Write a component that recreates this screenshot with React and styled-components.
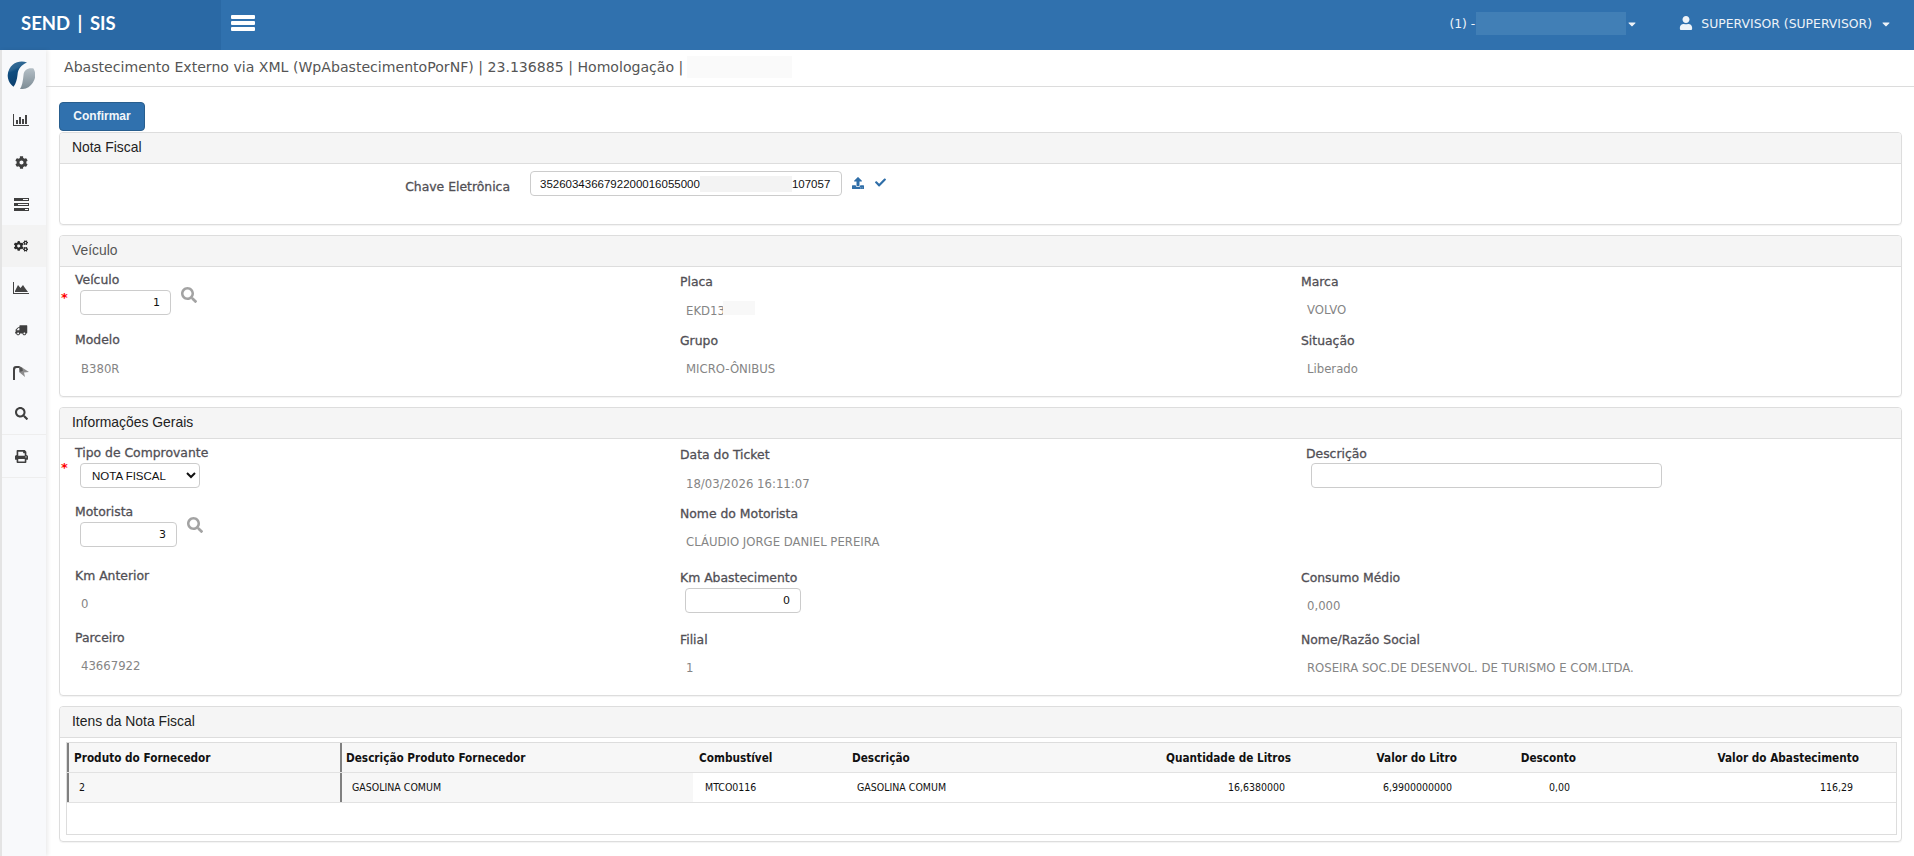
import styled, { createGlobalStyle } from "styled-components"
import { FaCog, FaCogs, FaTruck, FaSearch, FaPrint, FaUser, FaCheck, FaCaretDown, FaUpload } from "react-icons/fa"

const GlobalStyle = createGlobalStyle`
  html, body { margin: 0; padding: 0; background: #fff; }
  body { font-family: "DejaVu Sans", Verdana, sans-serif; font-size: 12px; color: #333; }
  * { box-sizing: border-box; }
`

const Page = styled.div`
  width: 1914px;
  height: 856px;
  overflow: hidden;
  display: flex;
  flex-direction: column;
`
const TopBar = styled.header`
  height: 50px;
  flex: none;
  display: flex;
  align-items: center;
  background: #3071ae;
  color: #fff;
`
const Brand = styled.div`
  width: 221px;
  height: 100%;
  display: flex;
  align-items: center;
  padding: 0 0 4px 21px;
  background: #2a69a5;
  font-family: Lato, "Open Sans", sans-serif;
  font-weight: 700;
  font-size: 18.500px;
  word-spacing: 3px;
  white-space: pre;
`
const Burger = styled.div`
  margin: 0 0 5px 10px;
  width: 24px;
  display: flex;
  flex-direction: column;
  gap: 2px;
`
const BurgerBar = styled.span`
  height: 4px;
  border-radius: 1px;
  background: #fff;
`
const TopRight = styled.div`
  margin-left: auto;
  display: flex;
  align-items: center;
  padding: 0 22px 4px 0;
  font-size: 12.4px;
  color: #eef3f8;
`
const Unit = styled.span`
  display: flex;
  align-items: center;
  margin-right: 41px;
`
const Blur = styled.span`
  display: inline-block;
  flex: none;
  width: ${(p) => p.$w}px;
  height: ${(p) => p.$h}px;
  margin-left: ${(p) => p.$ml || 0}px;
  background: ${(p) => p.$c};
`
const Caret = styled(FaCaretDown)`
  font-size: 12px;
  margin-left: ${(p) => p.$ml}px;
  margin-top: 2px;
`
const UserIcon = styled(FaUser)`
  font-size: 14px;
  margin-right: 8px;
`
const Body = styled.div`
  flex: 1;
  display: flex;
  min-height: 0;
`
const SideNav = styled.nav`
  width: 46px;
  flex: none;
  background: #f8f9fb;
  box-shadow: 2px 0 4px rgba(0, 0, 0, 0.08);
  border-left: 2px solid #e4e4e4;
  display: flex;
  flex-direction: column;
`
const LogoCell = styled.div`
  height: 49px;
  display: flex;
  align-items: center;
  justify-content: center;
  padding-right: 6px;
`
const NavItem = styled.div`
  height: ${(p) => p.$h || 42}px;
  display: flex;
  align-items: center;
  justify-content: center;
  padding-right: 6px;
  font-size: 13px;
  color: #3f3f3f;
  background: ${(p) => (p.$active ? "#f3f3f3" : "transparent")};
  border-bottom: ${(p) => (p.$line ? "1px solid #eeeeee" : "0")};
`
const TruckIcon = styled(FaTruck)`
  font-size: 12.500px;
  transform: scaleX(-1);
`
const CogsIcon = styled(FaCogs)`
  font-size: 14px;
  color: #2b2b2b;
`
const Main = styled.main`
  flex: 1;
  min-width: 0;
`
const TitleBar = styled.div`
  height: 37px;
  display: flex;
  align-items: center;
  padding: 0 0 2px 18px;
  border-bottom: 1px solid #dcdcdc;
  font-size: 14.100px;
  color: #555;
  white-space: nowrap;
`
const Content = styled.div`
  padding: 15px 12px 0 13px;
`
const ConfirmButton = styled.button`
  display: block;
  width: 86px;
  height: 29px;
  padding: 0 0 2px;
  border: 1px solid #285e8e;
  border-radius: 4px;
  background: #3071ae;
  color: #f2f6fa;
  font-family: "Liberation Sans", sans-serif;
  font-size: 12px;
  font-weight: 700;
`
const Panel = styled.section`
  margin: ${(p) => p.$mt}px 0 0;
  height: ${(p) => p.$h}px;
  border: 1px solid #dddddd;
  border-radius: 4px;
  box-shadow: 0 1px 1px rgba(0, 0, 0, 0.05);
  overflow: hidden;
`
const PanelHead = styled.div`
  height: 31px;
  display: flex;
  align-items: center;
  padding: 0 0 3px 12px;
  background: #f5f5f5;
  border-bottom: 1px solid #dddddd;
  font-family: "Liberation Sans", sans-serif;
  font-size: 13.900px;
  color: ${(p) => (p.$muted ? "#555" : "#222")};
`
const KeyRow = styled.div`
  display: flex;
  align-items: flex-start;
  padding-top: 7px;
`
const KeyLabel = styled.label`
  width: 450px;
  padding-top: 8px;
  text-align: right;
  font-weight: 500;
  font-size: 12.4px;
  color: #514f55;
  -webkit-text-stroke: 0.3px #514f55;
`
const KeyInput = styled.div`
  width: 312px;
  height: 25px;
  margin-left: 20px;
  padding: 0 10px 0 9px;
  border: 1px solid #ccc;
  border-radius: 4px;
  display: flex;
  align-items: center;
  font-family: "Liberation Sans", sans-serif;
  font-size: 11.500px;
  color: #111;
`
const KeyText = styled.div`
  flex: 1;
  display: flex;
  align-items: center;
  white-space: nowrap;
`
const IconLink = styled.span`
  margin: 6px 0 0 ${(p) => p.$ml}px;
  display: flex;
  font-size: ${(p) => p.$size}px;
  color: #2f6ea8;
`
const FieldGrid = styled.div`
  display: grid;
  grid-template-columns: 605px 622px 1fr;
`
const Field = styled.div`
  position: relative;
  height: ${(p) => p.$h}px;
  padding: ${(p) => p.$pt}px 0 0 ${(p) => p.$pl ?? 15}px;
`
const Label = styled.div`
  height: 20px;
  font-size: 12.4px;
  line-height: 20px;
  font-weight: 500;
  color: #514f55;
  -webkit-text-stroke: 0.3px #514f55;
`
const Value = styled.div`
  margin: ${(p) => p.$mt ?? 10}px 0 0 6px;
  font-size: 11.7px;
  line-height: 18px;
  color: #858585;
`
const InputLine = styled.div`
  display: flex;
  align-items: flex-start;
  margin: ${(p) => p.$mt || 0}px 0 0 5px;
`
const NumberBox = styled.div`
  width: ${(p) => p.$w}px;
  height: 25px;
  padding: 0 10px;
  border: 1px solid #ccc;
  border-radius: 4px;
  text-align: right;
  line-height: 23px;
  font-size: 11px;
  color: #111;
`
const SelectBox = styled.select`
  width: 120px;
  height: 25px;
  padding-left: 7px;
  border: 1px solid #ccc;
  border-radius: 4px;
  background: #fff;
  font-family: "Liberation Sans", sans-serif;
  font-size: 11.5px;
  color: #111;
`
const TextBox = styled.div`
  width: 351px;
  height: 25px;
  margin: -1px 0 0 5px;
  border: 1px solid #ccc;
  border-radius: 4px;
`
const Lookup = styled(FaSearch)`
  margin: ${(p) => p.$mt}px 0 0 10px;
  color: #a3a3a3;
  font-size: 16px;
`
const Required = styled.span`
  position: absolute;
  left: 1px;
  top: ${(p) => p.$top}px;
  color: #f00;
  font-size: 13px;
  font-weight: 700;
`
const Table = styled.div`
  margin: 4px 4px 0 6px;
  height: 93px;
  border: 1px solid #dddddd;
  font-family: "DejaVu Sans Condensed", "DejaVu Sans", sans-serif;
`
const Row = styled.div`
  display: grid;
  grid-template-columns: 273px 353px 153px 247px 204px 166px 119px 1fr;
  height: 30px;
  background: ${(p) => (p.$head ? "#f7f7f7" : "#fff")};
  border-bottom: 1px solid #e2e2e2;
  font-size: ${(p) => (p.$head ? 11.7 : 10.5)}px;
  font-weight: ${(p) => (p.$head ? 700 : 400)};
  color: #111;
`
const Cell = styled.div`
  display: flex;
  align-items: center;
  justify-content: ${(p) => (p.$right ? "flex-end" : "flex-start")};
  padding: ${(p) => p.$pad || "0 6px"};
  background: ${(p) => (p.$shade ? "#f7f7f7" : "transparent")};
  border-left: ${(p) => (p.$bar ? "2px solid #808080" : "0")};
  white-space: nowrap;
`
const BodyCell = styled(Cell)`
  padding-bottom: 2px;
`

function BarChartIcon() {
  return (
    <svg width="16" height="14" viewBox="0 0 16 14" fill="#444">
      <path d="M0 1h1v11h15v1H0z" />
      <path d="M3 7h2v4H3zM6 4h2v7H6zM9 6h2v5H9zM12 2h2v9h-2z" />
    </svg>
  )
}

function RowsIcon() {
  return (
    <svg width="15" height="13" viewBox="0 0 15 13" fill="#3f3f3f">
      <path d="M0 0h15v3H0zM0 5h15v3H0zM0 10h15v3H0z" />
      <path d="M9 1h5v1H9zM4 6h10v1H4zM11 11h3v1h-3z" fill="#f8f9fb" />
    </svg>
  )
}

function AreaIcon() {
  return (
    <svg width="16" height="13" viewBox="0 0 16 13" fill="#444">
      <path d="M0 0h1v11h15v1H0z" />
      <path d="M2 10V9l3-6 2.500 3 2.500-3 2 3 3 4z" />
    </svg>
  )
}

function FlagIcon() {
  return (
    <svg width="16" height="15" viewBox="0 0 16 15">
      <path d="M0 15V4q0-3 3-3h3l2 1v2L6 3H3.500Q2 3 2 5v10z" fill="#444" />
      <path d="M6 2l3 .5L16 7l-5 .5L12 12 6 7z" fill="#8e8e8e" />
      <path d="M6 2l3 .5 1 3-2.500 1.500z" fill="#555" />
    </svg>
  )
}

function LogoMark() {
  return (
    <svg width="28" height="28" viewBox="0 0 28 28">
      <defs>
        <linearGradient id="logoBlue" x1="0" y1="0" x2="0.300" y2="1">
          <stop offset="0" stopColor="#3a7099" />
          <stop offset="0.350" stopColor="#2a6390" />
          <stop offset="0.450" stopColor="#0f4d80" />
          <stop offset="1" stopColor="#0b3f6e" />
        </linearGradient>
        <linearGradient id="logoGrey" x1="0" y1="0" x2="0" y2="1">
          <stop offset="0" stopColor="#b4bfc6" />
          <stop offset="1" stopColor="#7d8c95" />
        </linearGradient>
      </defs>
      <path d="M20 1.500A14 14 0 0 0 6.500 25.800C9 23 10 18 10.500 14 11 8 14 4 20 1.500z" fill="url(#logoBlue)" />
      <path d="M26.500 7.500A14 14 0 0 1 13 28C15 25 16 20 16.500 14 17 9 21 6.500 26.500 7.500z" fill="url(#logoGrey)" />
    </svg>
  )
}

const NAV = [
  { id: "charts", icon: <BarChartIcon /> },
  { id: "config", icon: <FaCog /> },
  { id: "rows", icon: <RowsIcon /> },
  { id: "cogs", icon: <CogsIcon />, active: true },
  { id: "area", icon: <AreaIcon /> },
  { id: "truck", icon: <TruckIcon /> },
  { id: "flag", icon: <FlagIcon /> },
  { id: "search", icon: <FaSearch />, line: true },
  { id: "print", icon: <FaPrint />, line: true, h: 43 },
]

function App() {
  return (
    <Page>
      <GlobalStyle />
      <TopBar>
        <Brand>SEND | SIS</Brand>
        <Burger>
          <BurgerBar />
          <BurgerBar />
          <BurgerBar />
        </Burger>
        <TopRight>
          <Unit>
            (1) -
            <Blur $w={150} $h={23} $ml={1} $c="#417fb6" />
            <Caret $ml={0} />
          </Unit>
          <UserIcon />
          SUPERVISOR (SUPERVISOR)
          <Caret $ml={8} />
        </TopRight>
      </TopBar>
      <Body>
        <SideNav>
          <LogoCell><LogoMark /></LogoCell>
          {NAV.map((item) => (
            <NavItem key={item.id} $active={item.active} $line={item.line} $h={item.h}>{item.icon}</NavItem>
          ))}
        </SideNav>
        <Main>
          <TitleBar>
            Abastecimento Externo via XML (WpAbastecimentoPorNF) | 23.136885 | Homologação |
            <Blur $w={105} $h={22} $ml={4} $c="#fafafa" />
          </TitleBar>
          <Content>
            <ConfirmButton>Confirmar</ConfirmButton>
            <Panel $mt={1} $h={93}>
              <PanelHead>Nota Fiscal</PanelHead>
              <KeyRow>
                <KeyLabel>Chave Eletrônica</KeyLabel>
                <KeyInput>
                  <KeyText>
                    3526034366792200016055000
                    <Blur $w={92} $h={16} $c="#f3f3f3" />
                    107057
                  </KeyText>
                </KeyInput>
                <IconLink $ml={10} $size={12}><FaUpload /></IconLink>
                <IconLink $ml={11} $size={11}><FaCheck /></IconLink>
              </KeyRow>
            </Panel>

            <Panel $mt={10} $h={162}>
              <PanelHead $muted>Veículo</PanelHead>
              <FieldGrid>
                <Field $h={59} $pt={3}>
                  <Required $top={23}>*</Required>
                  <Label>Veículo</Label>
                  <InputLine>
                    <NumberBox $w={91}>1</NumberBox>
                    <Lookup $mt={-3} />
                  </InputLine>
                </Field>
                <Field $h={59} $pt={5}><Label>Placa</Label><Value $mt={9}>EKD13<Blur $w={32} $h={14} $ml={-2} $c="#f8f8f8" /></Value></Field>
                <Field $h={59} $pt={5} $pl={14}><Label>Marca</Label><Value $mt={9}>VOLVO</Value></Field>
                <Field $h={59} $pt={4}><Label>Modelo</Label><Value>B380R</Value></Field>
                <Field $h={59} $pt={5}><Label>Grupo</Label><Value $mt={9}>MICRO-ÔNIBUS</Value></Field>
                <Field $h={59} $pt={5} $pl={14}><Label>Situação</Label><Value $mt={9}>Liberado</Value></Field>
              </FieldGrid>
            </Panel>

            <Panel $mt={10} $h={289}>
              <PanelHead>Informações Gerais</PanelHead>
              <FieldGrid>
                <Field $h={59} $pt={4}>
                  <Required $top={21}>*</Required>
                  <Label>Tipo de Comprovante</Label>
                  <InputLine>
                    <SelectBox defaultValue="nf"><option value="nf">NOTA FISCAL</option></SelectBox>
                  </InputLine>
                </Field>
                <Field $h={59} $pt={6}><Label>Data do Ticket</Label><Value>18/03/2026 16:11:07</Value></Field>
                <Field $h={59} $pt={5} $pl={19}>
                  <Label>Descrição</Label>
                  <TextBox />
                </Field>
                <Field $h={63} $pt={4}>
                  <Label>Motorista</Label>
                  <InputLine>
                    <NumberBox $w={97}>3</NumberBox>
                    <Lookup $mt={-5} />
                  </InputLine>
                </Field>
                <Field $h={63} $pt={6}><Label>Nome do Motorista</Label><Value $mt={9}>CLÁUDIO JORGE DANIEL PEREIRA</Value></Field>
                <Field $h={63} $pt={0} />
                <Field $h={62} $pt={5}><Label>Km Anterior</Label><Value $mt={9}>0</Value></Field>
                <Field $h={62} $pt={7}>
                  <Label>Km Abastecimento</Label>
                  <InputLine><NumberBox $w={116}>0</NumberBox></InputLine>
                </Field>
                <Field $h={62} $pt={7} $pl={14}><Label>Consumo Médio</Label><Value $mt={9}>0,000</Value></Field>
                <Field $h={60} $pt={5}><Label>Parceiro</Label><Value $mt={9}>43667922</Value></Field>
                <Field $h={60} $pt={7}><Label>Filial</Label><Value $mt={9}>1</Value></Field>
                <Field $h={60} $pt={7} $pl={14}><Label>Nome/Razão Social</Label><Value $mt={9}>ROSEIRA SOC.DE DESENVOL. DE TURISMO E COM.LTDA.</Value></Field>
              </FieldGrid>
            </Panel>

            <Panel $mt={10} $h={136}>
              <PanelHead>Itens da Nota Fiscal</PanelHead>
              <Table>
                <Row $head>
                  <Cell $bar $pad="0 5px">Produto do Fornecedor</Cell>
                  <Cell $bar $pad="0 4px">Descrição Produto Fornecedor</Cell>
                  <Cell>Combustível</Cell>
                  <Cell>Descrição</Cell>
                  <Cell $right>Quantidade de Litros</Cell>
                  <Cell $right>Valor do Litro</Cell>
                  <Cell $right>Desconto</Cell>
                  <Cell $right $pad="0 37px 0 0">Valor do Abastecimento</Cell>
                </Row>
                <Row>
                  <BodyCell $bar $shade $pad="0 10px">2</BodyCell>
                  <BodyCell $bar $shade $pad="0 10px">GASOLINA COMUM</BodyCell>
                  <BodyCell $pad="0 12px">MTCO0116</BodyCell>
                  <BodyCell $pad="0 11px">GASOLINA COMUM</BodyCell>
                  <BodyCell $right $pad="0 12px">16,6380000</BodyCell>
                  <BodyCell $right $pad="0 11px">6,9900000000</BodyCell>
                  <BodyCell $right $pad="0 12px">0,00</BodyCell>
                  <BodyCell $right $pad="0 43px 0 0">116,29</BodyCell>
                </Row>
              </Table>
            </Panel>
          </Content>
        </Main>
      </Body>
    </Page>
  )
}

export default App
